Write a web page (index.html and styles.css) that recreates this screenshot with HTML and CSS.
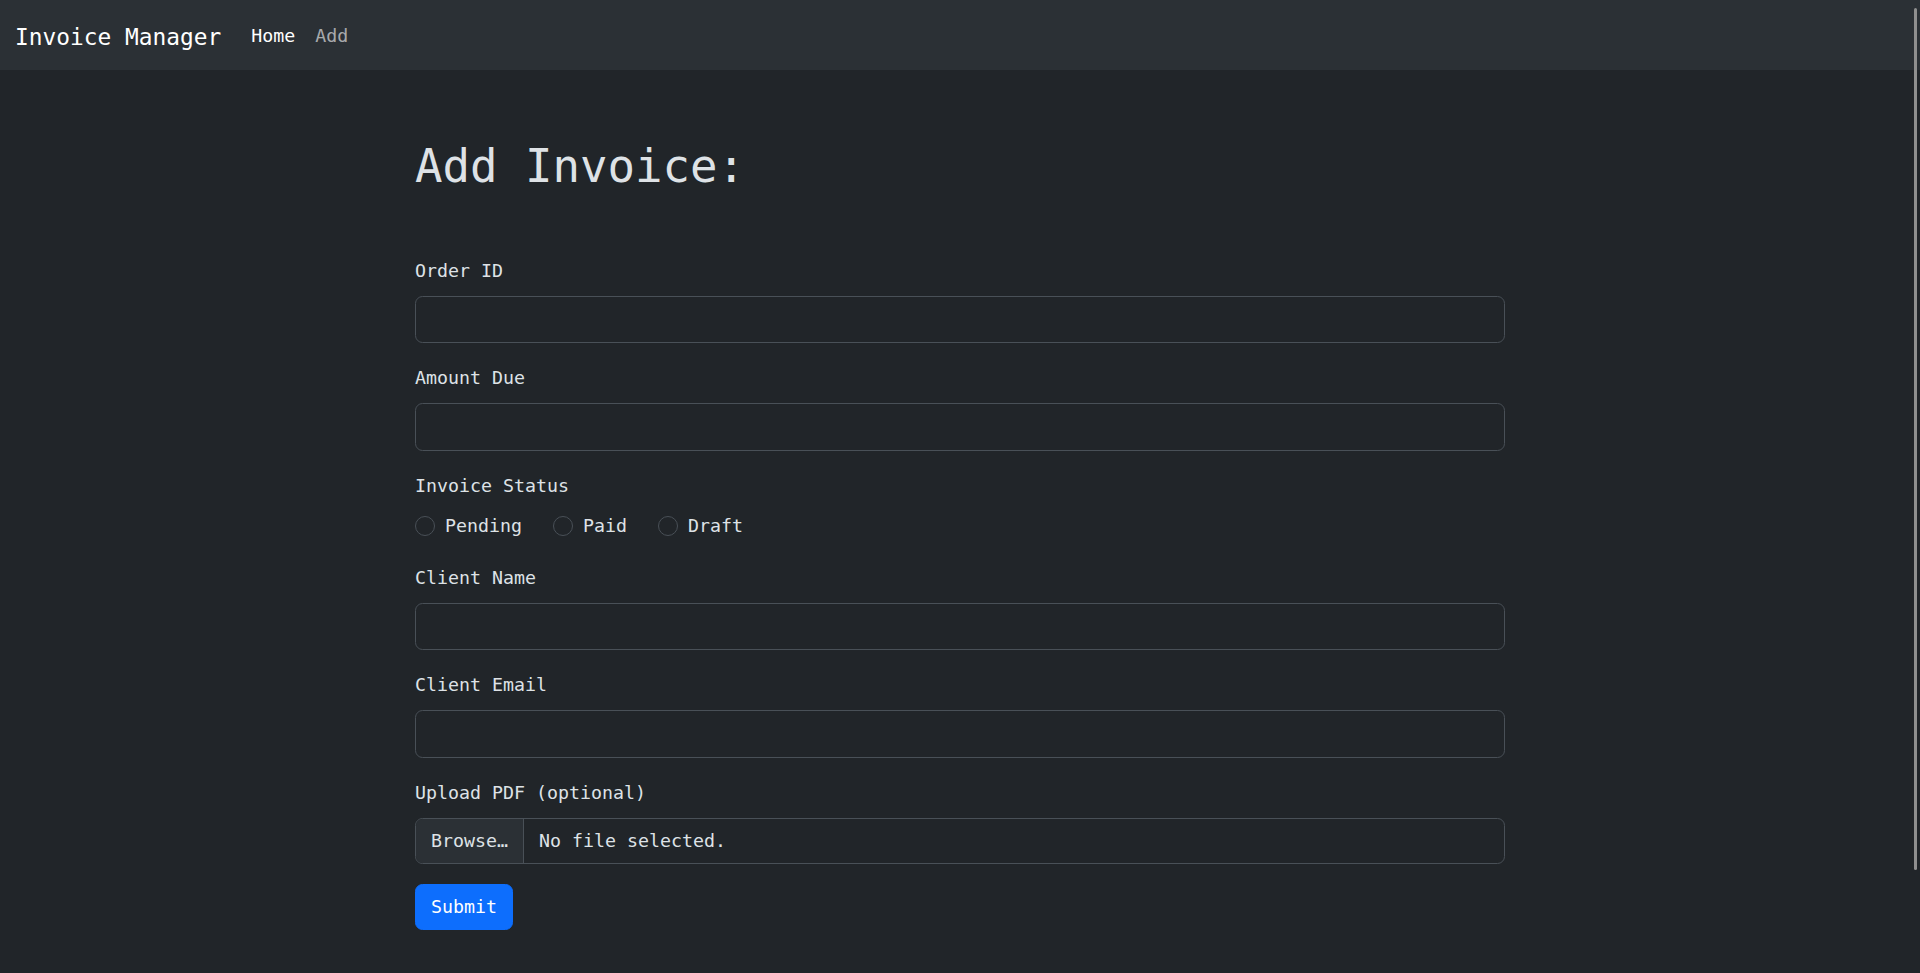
FILE: index.html
```html
<!DOCTYPE html>
<html lang="en">
<head>
<meta charset="utf-8">
<title>Invoice Manager</title>
<link rel="stylesheet" href="styles.css">
</head>
<body>
<nav class="navbar">
  <a class="brand" href="#">Invoice Manager</a>
  <ul class="nav">
    <li><a class="nav-link active" href="#">Home</a></li>
    <li><a class="nav-link" href="#">Add</a></li>
  </ul>
</nav>
<main class="container">
  <h1 class="title">Add Invoice:</h1>
  <form class="form">
    <div class="field">
      <label class="label" for="orderId">Order ID</label>
      <input class="control" id="orderId" type="text">
    </div>
    <div class="field">
      <label class="label" for="amount">Amount Due</label>
      <input class="control" id="amount" type="text">
    </div>
    <div class="field">
      <div class="label">Invoice Status</div>
      <div class="radio-row">
        <label class="check"><input class="radio" type="radio" name="status"><span>Pending</span></label>
        <label class="check"><input class="radio" type="radio" name="status"><span>Paid</span></label>
        <label class="check"><input class="radio" type="radio" name="status"><span>Draft</span></label>
      </div>
    </div>
    <div class="field">
      <label class="label" for="client">Client Name</label>
      <input class="control" id="client" type="text">
    </div>
    <div class="field">
      <label class="label" for="email">Client Email</label>
      <input class="control" id="email" type="text">
    </div>
    <div class="field">
      <div class="label">Upload PDF (optional)</div>
      <div class="file">
        <span class="file-btn">Browse…</span>
        <span class="file-name">No file selected.</span>
      </div>
    </div>
    <button class="submit" type="button">Submit</button>
  </form>
</main>
<div class="scroll-thumb"></div>
</body>
</html>
```
FILE: styles.css
```css
* { box-sizing: border-box; }

html, body {
  margin: 0;
  height: 100%;
  overflow: hidden;
}

body {
  background: #212529;
  color: #dee2e6;
  font-family: "DejaVu Sans Mono", "Liberation Mono", monospace;
  font-size: 18.27px;
  line-height: 30px;
}

.navbar {
  display: flex;
  align-items: center;
  height: 70px;
  padding: 10px 15px;
  background: #2b3035;
}

.brand {
  color: #fff;
  text-decoration: none;
  font-size: 22.84px;
  line-height: 37.5px;
  padding: 8.5px 0 4px;
  margin-right: 20px;
}

.nav {
  display: flex;
  list-style: none;
  margin: 0;
  padding: 0;
}

.nav-link {
  display: block;
  padding: 11px 10px 9px;
  color: rgba(255, 255, 255, 0.6);
  text-decoration: none;
}

.nav-link.active {
  color: #fff;
}

.container {
  width: 1090px;
  margin: 0 auto;
}

.title {
  margin: 67px 0 58.5px;
  font-size: 45.7px;
  line-height: 60px;
  font-weight: 400;
  color: #dee2e6;
}

.field {
  margin-bottom: 20px;
}

.label {
  display: block;
  margin-bottom: 10px;
  line-height: 30px;
}

.control {
  display: block;
  width: 100%;
  height: 47.5px;
  padding: 7px 15px;
  background: #212529;
  border: 1px solid #495057;
  border-radius: 7.5px;
  color: #dee2e6;
  font: inherit;
}

.radio-row {
  display: flex;
  height: 32px;
  align-items: flex-start;
}

.check {
  display: flex;
  align-items: center;
  height: 30px;
  margin-right: 31px;
}

.radio {
  appearance: none;
  -webkit-appearance: none;
  width: 20px;
  height: 20px;
  margin: 0 10px 0 0;
  border: 1px solid #495057;
  border-radius: 50%;
  background: #212529;
}

.file {
  display: flex;
  height: 46px;
  border: 1px solid #495057;
  border-radius: 7.5px;
  overflow: hidden;
}

.file-btn {
  display: flex;
  align-items: center;
  width: 108px;
  padding: 0 15px;
  background: #2b3035;
  border-right: 1px solid #495057;
}

.file-name {
  display: flex;
  align-items: center;
  padding: 0 15px;
}

.submit {
  display: block;
  height: 46px;
  padding: 7px 15px;
  background: #0d6efd;
  border: 1px solid #0d6efd;
  border-radius: 7.5px;
  color: #fff;
  font: inherit;
  line-height: 30px;
}

.scroll-thumb {
  position: fixed;
  top: 8px;
  right: 3px;
  width: 3px;
  height: 862px;
  background: #8f8f8f;
  border-radius: 2px;
}
```
